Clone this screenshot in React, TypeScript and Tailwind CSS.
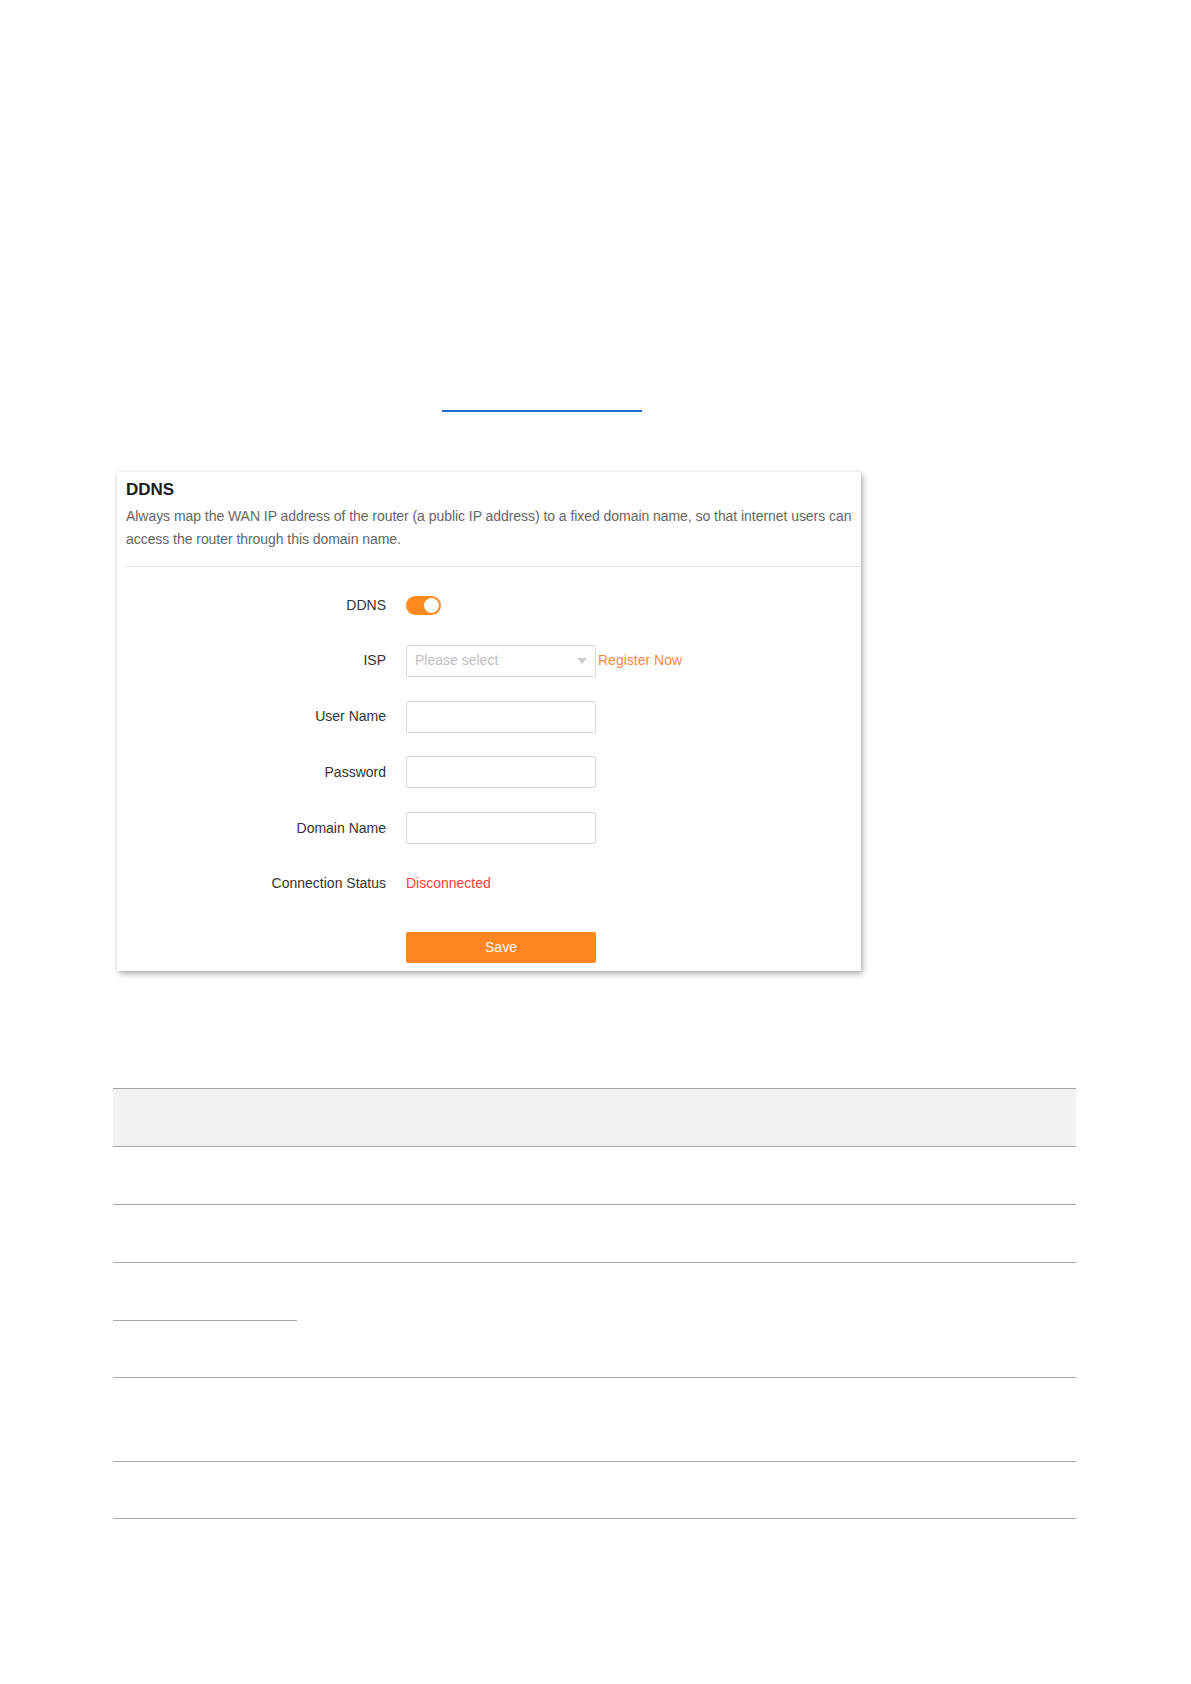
import React from "react";

const rowLabel = "w-[269px] shrink-0 pr-0 text-right text-[14px] text-[#333]";

function Field({ label, children }: { label: string; children: React.ReactNode }) {
  return (
    <div className="flex h-[32px] items-center gap-[20px]">
      <div className={rowLabel}>{label}</div>
      {children}
    </div>
  );
}

function TextInput() {
  return <input className="h-[32px] w-[190px] rounded-[2px] border border-[#d9d9d9] bg-white px-2 text-[14px] outline-none" />;
}

export default function App() {
  return (
    <div className="relative h-[1684px] w-[1191px] bg-white font-['Liberation_Sans',Arial,sans-serif]">
      {/* link underline */}
      <div className="pt-[410px]">
        <div className="ml-[442px] h-[2px] w-[200px] bg-[#1a6dd4]" />
      </div>

      {/* DDNS card */}
      <div className="ml-[117px] mt-[60px] w-[744px] bg-white pb-[8px] shadow-[2px_3px_6px_rgba(0,0,0,0.3),0_0_3px_rgba(0,0,0,0.08)]">
        <div className="pl-[9px] pt-[7px]">
          <h2 className="text-[17px] font-bold leading-[22px] text-[#1a1a1a]">DDNS</h2>
          <p className="mt-[4px] pr-[2px] text-[14px] leading-[23px] tracking-[-0.05px] text-[#666]">
            Always map the WAN IP address of the router (a public IP address) to a fixed domain name, so that internet users can access the router through this domain name.
          </p>
          <div className="mt-[15px] h-px bg-[#e5e5e5]" />
        </div>

        <div className="mt-[22px] flex flex-col gap-[23.8px]">
          <Field label="DDNS">
            <div className="flex h-[19px] w-[35px] items-center justify-end rounded-full bg-[#ff8a1f] px-[2px]">
              <div className="h-[15px] w-[15px] rounded-full bg-white" />
            </div>
          </Field>
          <Field label="ISP">
            <div className="flex items-center">
              <div className="flex h-[32px] w-[190px] items-center justify-between rounded-[2px] border border-[#d9d9d9] bg-white pl-[8px] pr-[8px]">
                <span className="text-[14px] text-[#c0c0c0]">Please select</span>
                <svg width="10" height="6" viewBox="0 0 10 6">
                  <path d="M0 0h10L5 6z" fill="#cccccc" />
                </svg>
              </div>
              <span className="ml-[2px] text-[14px] text-[#ff8a3d]">Register Now</span>
            </div>
          </Field>
          <Field label="User Name">
            <TextInput />
          </Field>
          <Field label="Password">
            <TextInput />
          </Field>
          <Field label="Domain Name">
            <TextInput />
          </Field>
          <Field label="Connection Status">
            <span className="text-[14px] text-[#ff3b3b]">Disconnected</span>
          </Field>
        </div>

        <div className="mt-[32px] flex gap-[20px]">
          <div className="w-[269px] shrink-0" />
          <button className="h-[31px] w-[190px] rounded-[2px] bg-[#ff8422] text-[14px] text-white">Save</button>
        </div>
      </div>

      {/* table */}
      <div className="ml-[113px] mt-[117px] w-[963px]">
        <div className="h-[58px] border-t border-[#a6a6a6] bg-[#f2f2f2]" />
        <div className="h-[58px] border-t border-[#a6a6a6]" />
        <div className="h-[58px] border-t border-[#a6a6a6]" />
        <div className="h-[58px] border-t border-[#a6a6a6]" />
        <div className="h-[57px]">
          <div className="h-px w-[184px] bg-[#a6a6a6]" />
        </div>
        <div className="h-[84px] border-t border-[#a6a6a6]" />
        <div className="h-[57px] border-t border-[#a6a6a6]" />
        <div className="border-t border-[#a6a6a6]" />
      </div>
    </div>
  );
}
